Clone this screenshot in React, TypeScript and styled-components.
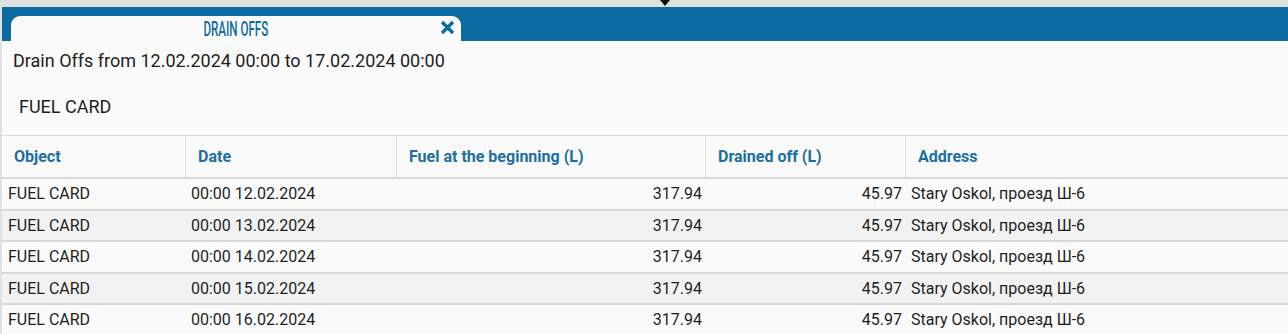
import * as React from 'react';
import styled, { createGlobalStyle } from 'styled-components';

const rows = [
    { object: 'FUEL CARD', date: '00:00 12.02.2024', start: '317.94', drained: '45.97', address: 'Stary Oskol, проезд Ш-6' },
    { object: 'FUEL CARD', date: '00:00 13.02.2024', start: '317.94', drained: '45.97', address: 'Stary Oskol, проезд Ш-6' },
    { object: 'FUEL CARD', date: '00:00 14.02.2024', start: '317.94', drained: '45.97', address: 'Stary Oskol, проезд Ш-6' },
    { object: 'FUEL CARD', date: '00:00 15.02.2024', start: '317.94', drained: '45.97', address: 'Stary Oskol, проезд Ш-6' },
    { object: 'FUEL CARD', date: '00:00 16.02.2024', start: '317.94', drained: '45.97', address: 'Stary Oskol, проезд Ш-6' },
];

export default () => {
    return (
        <Page>
            <GlobalStyle />
            <TopStrip>
                <Arrow />
            </TopStrip>
            <TabBar>
                <Tab>
                    <TabTitle>DRAIN OFFS</TabTitle>
                    <Close>
                        <svg width="15" height="15" viewBox="0 0 15 15">
                            <path d="M2 2 L13 13 M13 2 L2 13" stroke="#0a6ca0" strokeWidth="3.4" strokeLinecap="butt" />
                        </svg>
                    </Close>
                </Tab>
            </TabBar>
            <Content>
                <Heading>Drain Offs from 12.02.2024 00:00 to 17.02.2024 00:00</Heading>
                <Group>FUEL CARD</Group>
                <Table>
                    <HeadRow>
                        <HeadCell>Object</HeadCell>
                        <HeadCell>Date</HeadCell>
                        <HeadCell>Fuel at the beginning (L)</HeadCell>
                        <HeadCell>Drained off (L)</HeadCell>
                        <HeadCell>Address</HeadCell>
                    </HeadRow>
                    {rows.map((r, i) => (
                        <Row key={i} striped={i % 2 === 1}>
                            <Cell>{r.object}</Cell>
                            <Cell>{r.date}</Cell>
                            <Cell num>{r.start}</Cell>
                            <Cell num>{r.drained}</Cell>
                            <Cell>{r.address}</Cell>
                        </Row>
                    ))}
                </Table>
            </Content>
        </Page>
    );
};

const GlobalStyle = createGlobalStyle`
    html, body {
        margin: 0;
        padding: 0;
        background: #e0e0e0;
        font-family: Roboto, "Liberation Sans", sans-serif;
        overflow: hidden;
    }
`;

const COLS = '183px 211px 309px 200px 1fr';

const Page = styled.div`
    width: 1288px;
    height: 334px;
    display: flex;
    flex-direction: column;
    padding-left: 2px;
    box-sizing: border-box;
    background: #e0e0e0;
    overflow: hidden;
`;

const TopStrip = styled.div`
    flex-shrink: 0;
    height: 7px;
    position: relative;
`;

const Arrow = styled.div`
    position: absolute;
    left: 658px;
    top: 0;
    width: 0;
    height: 0;
    border-left: 5px solid transparent;
    border-right: 5px solid transparent;
    border-top: 6px solid #111;
`;

const TabBar = styled.div`
    flex-shrink: 0;
    height: 34px;
    background: #0a6ca0;
    display: flex;
    align-items: flex-end;
    padding-left: 9px;
`;

const Tab = styled.div`
    width: 450px;
    height: 25px;
    background: #fafafa;
    border-radius: 9px 9px 0 0;
    position: relative;
    display: flex;
    justify-content: center;
    align-items: center;
`;

const TabTitle = styled.span`
    display: inline-block;
    font-size: 20px;
    font-weight: 500;
    color: #0a6ca0;
    transform: scaleX(0.58);
    margin-top: 1px;
`;

const Close = styled.div`
    position: absolute;
    right: 6px;
    top: 4px;
    width: 15px;
    height: 15px;
    display: flex;
`;

const Content = styled.div`
    flex: 1 0 auto;
    background: #fafafa;
    color: #1e1e1e;
`;

const Heading = styled.div`
    font-size: 18px;
    line-height: 22px;
    padding: 9px 0 0 11px;
`;

const Group = styled.div`
    font-size: 18px;
    line-height: 22px;
    padding: 24px 0 0 17px;
    height: 63px;
    box-sizing: border-box;
`;

const Table = styled.div`
    border-top: 1px solid #dcdcdc;
`;

const HeadRow = styled.div`
    display: grid;
    grid-template-columns: ${COLS};
    height: 43px;
    border-bottom: 2px solid #d8d8d8;
    box-sizing: border-box;
`;

const HeadCell = styled.div`
    display: flex;
    align-items: center;
    padding-left: 12px;
    font-size: 16px;
    font-weight: 700;
    color: #1a6fa3;
    & + & {
        border-left: 1px solid #dcdcdc;
    }
`;

const Row = styled.div<{ striped?: boolean }>`
    display: grid;
    grid-template-columns: ${COLS};
    height: 31.5px;
    border-bottom: 2px solid #d8d8d8;
    box-sizing: border-box;
    background: ${({ striped }) => (striped ? '#f2f2f2' : '#fafafa')};
`;

const Cell = styled.div<{ num?: boolean }>`
    display: flex;
    align-items: center;
    justify-content: ${({ num }) => (num ? 'flex-end' : 'flex-start')};
    padding: ${({ num }) => (num ? '0 3px 0 0' : '0 0 0 6px')};
    font-size: 16px;
    color: #1e1e1e;
`;
